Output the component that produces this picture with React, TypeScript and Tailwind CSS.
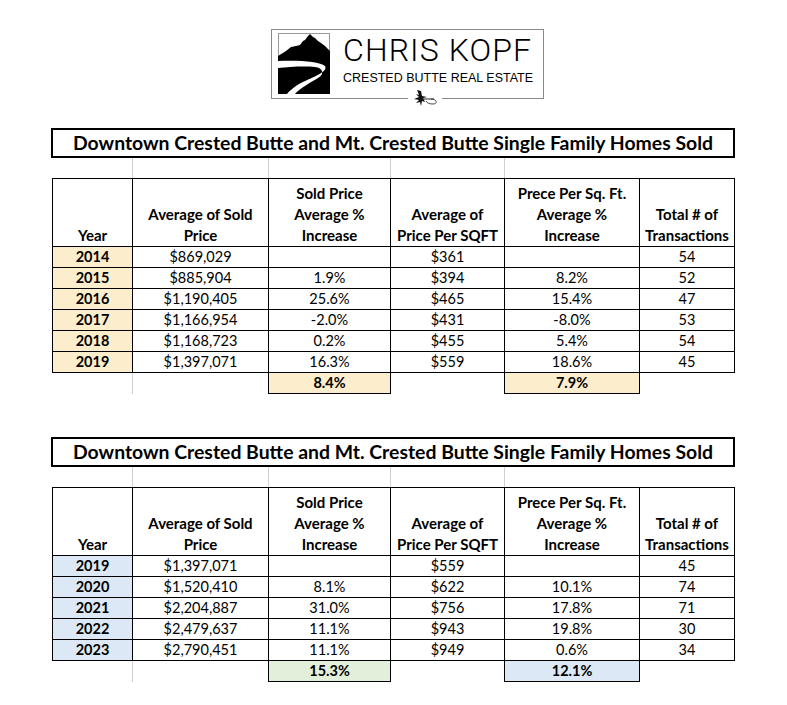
import React from "react";

type Row = [string, string, string, string, string, string];

const t1: Row[] = [
  ["2014", "$869,029", "", "$361", "", "54"],
  ["2015", "$885,904", "1.9%", "$394", "8.2%", "52"],
  ["2016", "$1,190,405", "25.6%", "$465", "15.4%", "47"],
  ["2017", "$1,166,954", "-2.0%", "$431", "-8.0%", "53"],
  ["2018", "$1,168,723", "0.2%", "$455", "5.4%", "54"],
  ["2019", "$1,397,071", "16.3%", "$559", "18.6%", "45"],
];

const t2: Row[] = [
  ["2019", "$1,397,071", "", "$559", "", "45"],
  ["2020", "$1,520,410", "8.1%", "$622", "10.1%", "74"],
  ["2021", "$2,204,887", "31.0%", "$756", "17.8%", "71"],
  ["2022", "$2,479,637", "11.1%", "$943", "19.8%", "30"],
  ["2023", "$2,790,451", "11.1%", "$949", "0.6%", "34"],
];

const COLS = "grid grid-cols-[80px_136px_122px_114px_135px_95px]";

function Logo() {
  return (
    <div className="relative ml-[271px] w-[273px] h-[70px] border border-[#8a8a8a] flex items-start">
      <svg width="52" height="61" viewBox="0 0 52 61" className="ml-[6px] mt-[3px] shrink-0">
        <rect x="0.5" y="0.5" width="51" height="60" fill="#fff" stroke="#9a9a9a" strokeWidth="1" />
        <path d="M0,23 L8,18 L13,14 L18,13 L22,12 L25,8 L27,7 L30,3 L32,1 L35,4 L37,5 L40,8 L43,10 L47,13 L52,18 L52,61 L0,61 Z" fill="#000" />
        <path d="M0,28 C18,27 42,28 47,33 C51,39 32,45 21,51 C15,55 11,58 9,61 L17,61 C21,56 33,49 40,45 C47,41 45,35 37,34 C25,33 11,34 0,35 Z" fill="#fff" />
      </svg>
      <div className="ml-[13px] flex flex-col">
        <div
          className="mt-[4px] text-[32px] leading-none font-light text-black tracking-[1.1px]"
          style={{ fontFamily: "Roboto, 'Liberation Sans', sans-serif" }}
        >
          CHRIS KOPF
        </div>
        <div
          className="mt-[6px] text-[12.5px] leading-none text-black"
          style={{ fontFamily: "'Liberation Sans', Arial, sans-serif" }}
        >
          CRESTED BUTTE REAL ESTATE
        </div>
      </div>
      <svg width="34" height="18" viewBox="0 0 34 18" className="absolute left-[136px] top-[59px]">
        <rect x="0" y="8" width="34" height="4" fill="#fff" />
        <path d="M9,1 L11,6 L8,5 L11,8 L6,10 L11,11 L8,14 L12,13 L13,17 L14,12 L17,13 L15,9 L19,8 L14,7 L13,2 Z" fill="#111" />
        <path d="M13,10 L26,10" stroke="#222" strokeWidth="1" />
        <path d="M23,10 C29,10 30,15 25,15 C21,15 19,14 18,12" stroke="#333" strokeWidth="0.9" fill="none" />
      </svg>
    </div>
  );
}

function Title() {
  return (
    <div className="ml-[51px] w-[684px] h-[30px] border-2 border-black flex items-center justify-center">
      <span className="text-[19.4px] font-bold text-black leading-none">
        Downtown Crested Butte and Mt. Crested Butte Single Family Homes Sold
      </span>
    </div>
  );
}

function Header() {
  const h = "border-r border-b border-black h-[68px] flex flex-col justify-end items-center text-center font-bold text-[15px] leading-[21px] whitespace-nowrap";
  return (
    <div className={COLS}>
      <div className={h}>Year</div>
      <div className={h}>
        <span>Average of Sold</span>
        <span>Price</span>
      </div>
      <div className={h}>
        <span>Sold Price</span>
        <span>Average %</span>
        <span>Increase</span>
      </div>
      <div className={h}>
        <span>Average of</span>
        <span>Price Per SQFT</span>
      </div>
      <div className={h}>
        <span>Prece Per Sq. Ft.</span>
        <span>Average %</span>
        <span>Increase</span>
      </div>
      <div className={h}>
        <span>Total # of</span>
        <span>Transactions</span>
      </div>
    </div>
  );
}

function Section({
  rows,
  yearBg,
  sum1,
  sum1Bg,
  sum2,
  sum2Bg,
}: {
  rows: Row[];
  yearBg: string;
  sum1: string;
  sum1Bg: string;
  sum2: string;
  sum2Bg: string;
}) {
  const cell = "border-r border-b border-black h-[21px] flex items-center justify-center text-[14.5px] leading-none text-black";
  return (
    <div>
      <Title />
      <div className={`ml-[53px] h-[20px] ${COLS}`}>
        <div className="border-r border-[#d0d0d0]" />
        <div className="border-r border-[#d0d0d0]" />
        <div className="border-r border-[#d0d0d0]" />
        <div className="border-r border-[#d0d0d0]" />
        <div />
        <div />
      </div>
      <div className="ml-[52px] w-[683px] border-l border-t border-black">
        <Header />
        {rows.map((r) => (
          <div key={r[0]} className={COLS}>
            <div className={`${cell} font-bold ${yearBg}`}>{r[0]}</div>
            <div className={cell}>{r[1]}</div>
            <div className={cell}>{r[2]}</div>
            <div className={cell}>{r[3]}</div>
            <div className={cell}>{r[4]}</div>
            <div className={cell}>{r[5]}</div>
          </div>
        ))}
      </div>
      <div className={`ml-[53px] h-[21px] ${COLS}`}>
        <div className="border-r border-[#d0d0d0]" />
        <div className="border-r border-black" />
        <div className={`border-r border-b border-black flex items-center justify-center text-[14.5px] font-bold leading-none ${sum1Bg}`}>
          {sum1}
        </div>
        <div className="border-r border-black" />
        <div className={`border-r border-b border-black flex items-center justify-center text-[14.5px] font-bold leading-none ${sum2Bg}`}>
          {sum2}
        </div>
        <div />
      </div>
    </div>
  );
}

export default function App() {
  return (
    <div
      className="w-[787px] h-[705px] bg-white text-black pt-[29px] overflow-hidden"
      style={{ fontFamily: "Lato, 'Open Sans', sans-serif" }}
    >
      <Logo />
      <div className="mt-[29px]">
        <Section
          rows={t1}
          yearBg="bg-[#fcedcc]"
          sum1="8.4%"
          sum1Bg="bg-[#fcedcc]"
          sum2="7.9%"
          sum2Bg="bg-[#fcedcc]"
        />
      </div>
      <div className="mt-[43px]">
        <Section
          rows={t2}
          yearBg="bg-[#dce8f5]"
          sum1="15.3%"
          sum1Bg="bg-[#e2efda]"
          sum2="12.1%"
          sum2Bg="bg-[#dce8f5]"
        />
      </div>
    </div>
  );
}
